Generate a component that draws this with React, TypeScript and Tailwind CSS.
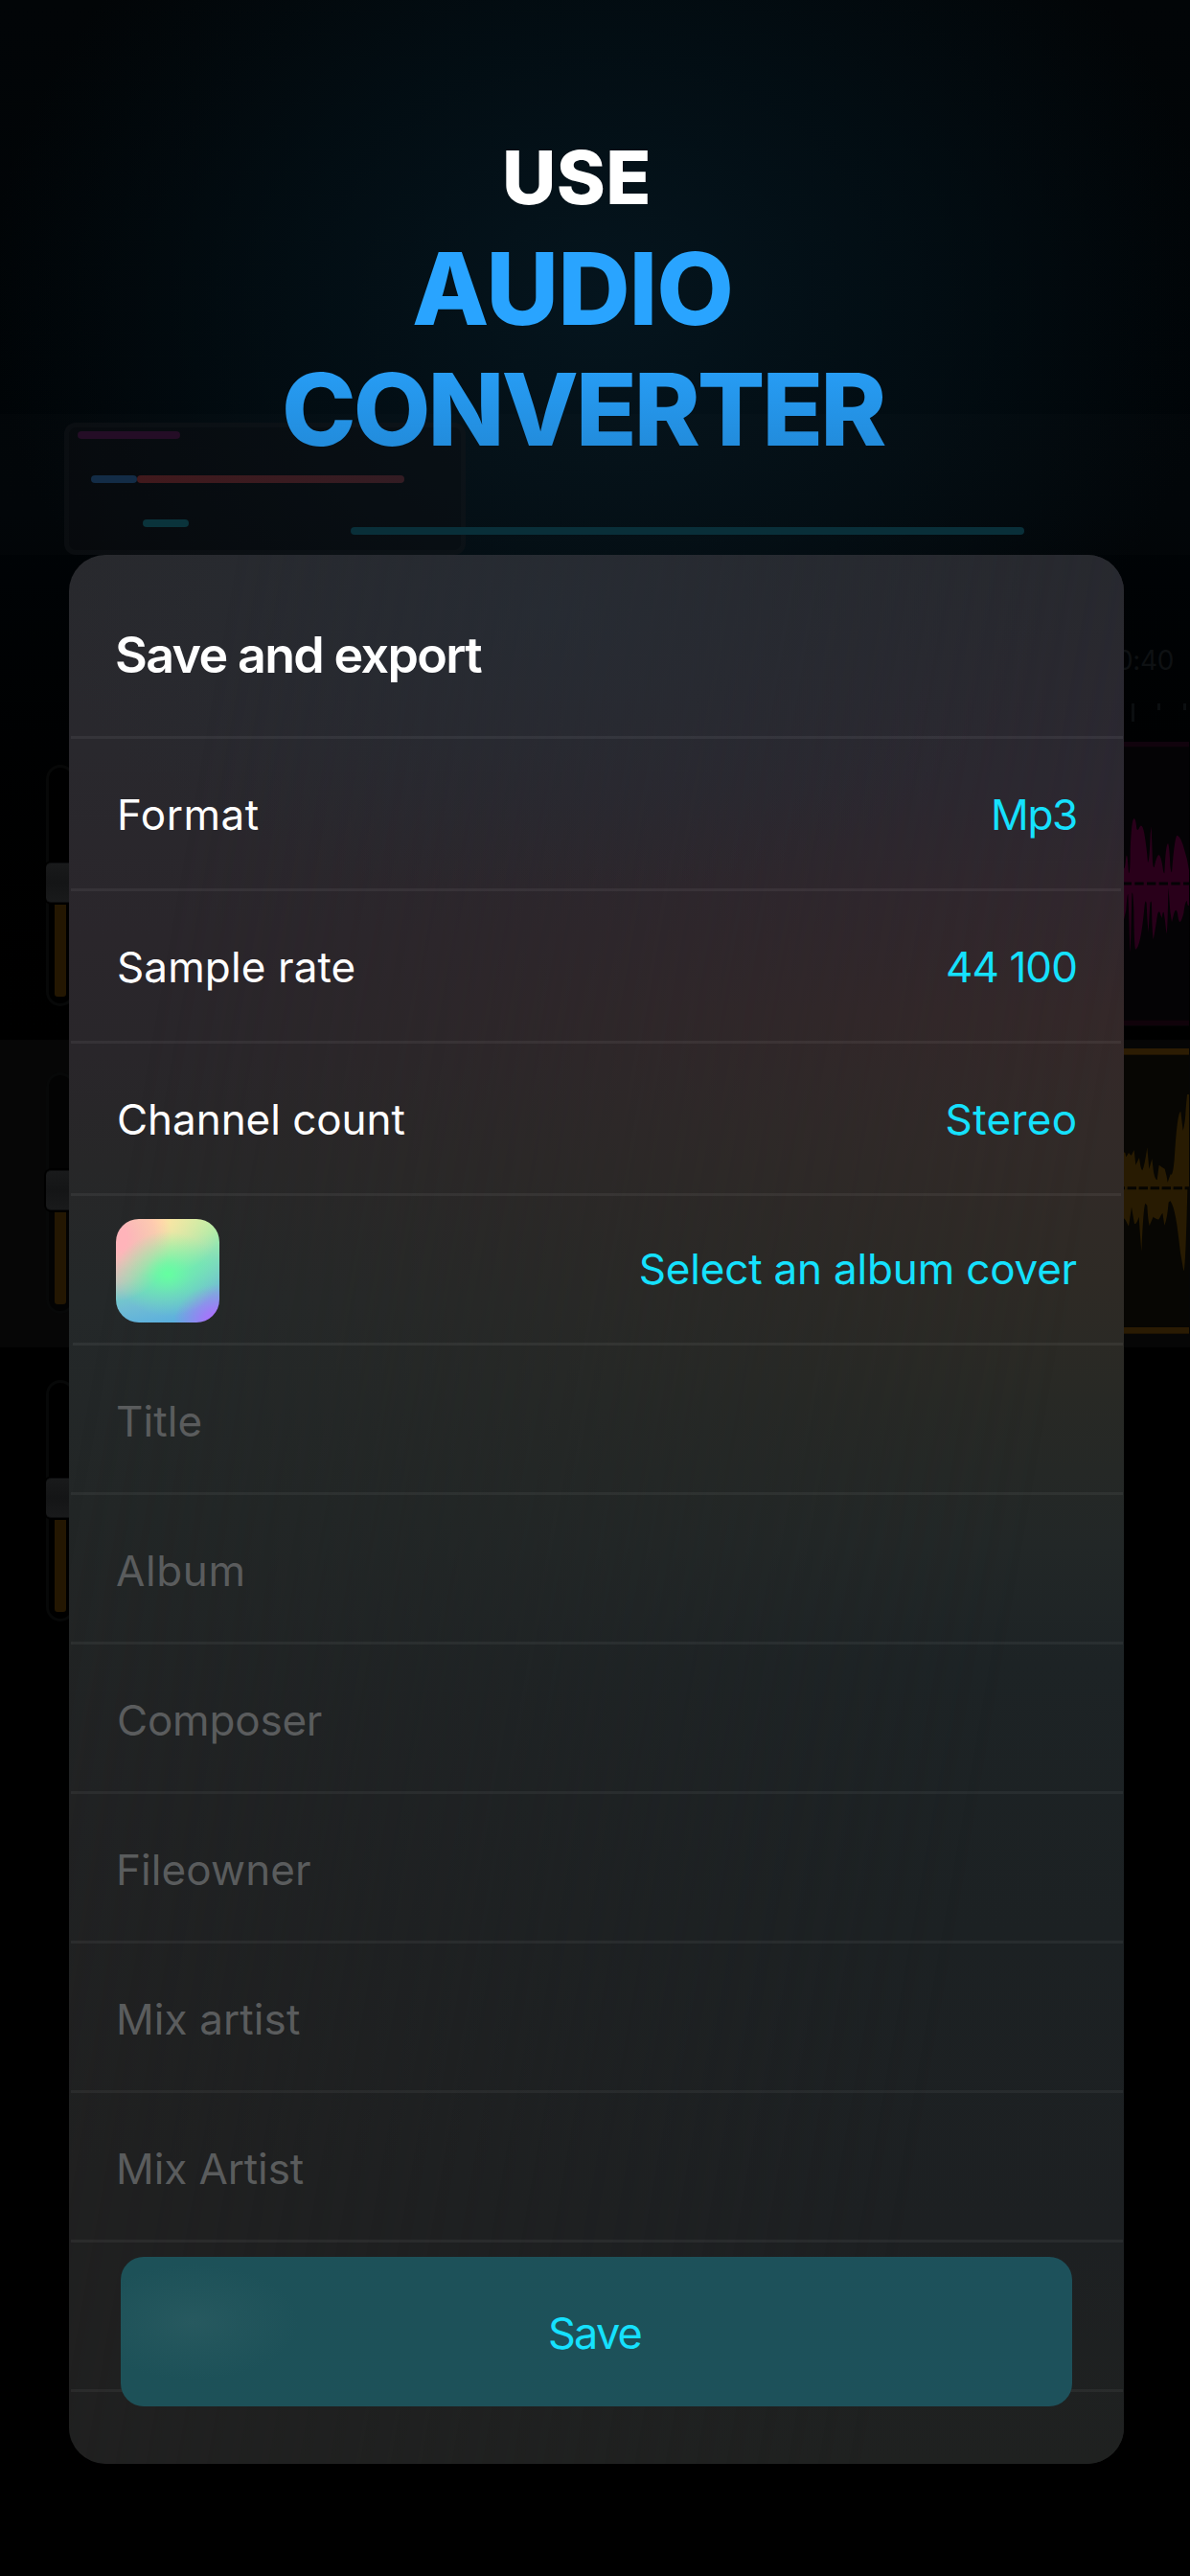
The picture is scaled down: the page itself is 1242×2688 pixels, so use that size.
type Setting = { label: string; value: string; labelClass: string; valueClass: string };

const settings: Setting[] = [
  { label: "Format", value: "Mp3", labelClass: "tracking-[0.52px]", valueClass: "tracking-[-1.3px]" },
  { label: "Sample rate", value: "44 100", labelClass: "tracking-[0.12px]", valueClass: "tracking-[-0.94px]" },
  { label: "Channel count", value: "Stereo", labelClass: "tracking-[-0.05px]", valueClass: "tracking-[0.37px] mr-[-0.5px]" },
];

const fields = [
  { name: "Title", className: "tracking-[0.1px]" },
  { name: "Album", className: "tracking-[0.63px]" },
  { name: "Composer", className: "tracking-[-0.2px] ml-px" },
  { name: "Fileowner", className: "tracking-[0.1px]" },
  { name: "Mix artist", className: "tracking-[0.1px]" },
  { name: "Mix Artist", className: "tracking-[-0.1px]" },
];

function VolumeSlider() {
  return (
    <div className="relative mt-[34px] ml-12 h-[252px] w-[30px] rounded-[15px] border-3 border-[#070808] bg-black/40">
      <div className="absolute top-[97px] -left-[5px] h-[46px] w-11 rounded-lg bg-black" />
      <div className="absolute top-[99px] -left-[3px] h-[42px] w-10 rounded-[5px] border-y border-[#0d0e0f] bg-linear-to-b from-[#191a1b] via-[#141516] to-[#191a1b]" />
      <div className="absolute top-[143px] left-[6px] h-[96px] w-3 rounded-b-[3px] bg-[#241702]" />
    </div>
  );
}

function MagentaClip() {
  return (
    <svg width="68" height="297" viewBox="393 403 204 891" className="block">
      <rect x="393" y="403" width="204" height="891" fill="#040305" />
      <rect x="393" y="403" width="204" height="16" fill="#11030d" />
      <rect x="393" y="1275" width="204" height="16" fill="#10020a" />
      <path
        fill="#29001a"
        d="M393 800Q397 800 399 770Q402 745 405 775L408 815Q413 815 413 740Q417 643 425 643Q430 643 433 675Q437 685 442 670Q450 655 457 690Q464 730 468 780Q473 780 476 690L479 668L483 780Q485 800 488 795Q496 757 503 757Q510 762 515 800Q517 815 520 815Q524 722 531 722Q535 722 538 790Q540 812 543 812Q552 696 560 696Q572 700 582 740Q592 770 597 805L597 915Q592 920 590 900Q584 905 580 940Q572 970 567 967Q563 960 561 940Q556 920 550 940L543 968L538 935Q534 880 532 860Q530 1003 526 1003Q522 960 518 938Q515 930 512 955L508 945Q503 925 498 945Q490 1000 485 1022Q481 1000 480 910Q476 890 474 925L470 1000Q466 970 464 910Q460 890 457 925Q445 1050 429 1053Q425 1040 424 930Q421 860 418 880Q414 1070 412 1060Q408 920 406 880Q403 880 400 930L393 960Z"
      />
      <path d="M393 847H597" stroke="#040305" strokeWidth="9" strokeDasharray="28 10" strokeDashoffset="4" />
    </svg>
  );
}

function AmberClip() {
  return (
    <svg width="68" height="298" viewBox="393 103 204 894" className="block">
      <rect x="393" y="103" width="204" height="894" fill="#070603" />
      <rect x="393" y="103" width="204" height="20" fill="#2c1c03" />
      <rect x="393" y="976" width="204" height="20" fill="#2a1b03" />
      <path
        fill="#281b02"
        d="M393 428L397 430L400 443L408 430L416 438L425 421L430 468L441 445Q446 485 451 485Q458 470 466 413L472 480L481 448L486 490Q491 515 497 515L503 468Q512 475 521 480Q527 500 530 522L539 497Q546 505 551 450Q560 300 571 300L578 360Q585 340 587 290L591 247H597V540L592 545Q586 800 580 800Q568 740 563 685Q553 600 538 580L533 585Q528 640 520 657L514 618Q508 625 503 638Q495 640 485 630L473 658Q468 640 466 595L460 588Q454 600 448 740Q443 680 440 630Q433 655 426 652L417 600L408 660L398 640L393 635Z"
      />
      <path d="M393 540H597" stroke="#060502" strokeWidth="9" strokeDasharray="28 8" strokeDashoffset="25" />
    </svg>
  );
}

/* Dimmed editor screen that sits behind the export sheet. */
function EditorBackdrop() {
  return (
    <div className="absolute inset-0 flex flex-col bg-linear-to-b from-[#020507] via-[#000407] via-20% to-black to-45%">
      <div className="absolute inset-x-0 top-0 h-[800px] bg-[radial-gradient(ellipse_640px_540px_at_630px_310px,#05151e_0%,#031017b3_55%,transparent_100%)]" />
      <div className="relative mt-[432px] h-[147px] bg-white/[0.008] pt-[9px]">
        <div className="relative ml-[67px] h-[138px] w-[419px] rounded-xl border-5 border-white/[0.018] bg-[#0b0d12]/50">
          <div className="absolute top-[4px] left-[9px] h-2 w-[107px] rounded-full bg-[#240d26]" />
          <div className="absolute top-[50px] left-[23px] h-2 w-12 rounded-full bg-[#132c46]" />
          <div className="absolute top-[50px] left-[71px] h-2 w-[279px] rounded-full bg-linear-to-r from-[#41191c] to-[#331c23]" />
          <div className="absolute top-[96px] left-[77px] h-2 w-12 rounded-full bg-[#0a333b]" />
        </div>
        <div className="absolute top-[118px] left-[366px] h-2 w-[703px] rounded-full bg-[#092f39]" />
      </div>
      <div className="relative flex h-[185px] flex-col items-end">
        <div className="mt-[93px] mr-[17px] font-['Inter',sans-serif] text-[28px] leading-[34px] tracking-[-0.4px] text-[#0e1113]">0:40</div>
        <div className="mt-[28px] flex w-[61px] items-start gap-6">
          <div className="h-[19px] w-[3px] shrink-0 bg-[#0b0e10]" />
          <div className="h-[7px] w-[3px] shrink-0 bg-[#0b0e10]" />
          <div className="h-[7px] w-[3px] shrink-0 bg-[#0b0e10]" />
        </div>
      </div>
      <div className="relative flex h-[321px] items-start justify-between pr-px">
        <VolumeSlider />
        <div className="mt-[10px]"><MagentaClip /></div>
      </div>
      <div className="relative flex h-[321px] items-start justify-between bg-[#060606] pr-px">
        <VolumeSlider />
        <div className="mt-[9px]"><AmberClip /></div>
      </div>
      <div className="relative h-[321px]">
        <VolumeSlider />
      </div>
    </div>
  );
}

export default function App() {
  return (
    <main className="relative h-[2688px] w-[1242px] overflow-hidden bg-black font-['Inter',sans-serif]">
      <EditorBackdrop />

      <header className="relative flex h-[579px] flex-col items-start pt-[135px] font-extrabold whitespace-nowrap">
        <span className="ml-[524px] text-[77.5px] leading-[100px] tracking-[0.4px] text-white">USE</span>
        <h1 className="mt-[3px] bg-linear-to-b from-[#29a4ff] from-45% to-[#228cdc] to-90% bg-clip-text pr-2 text-[104.5px] leading-[126px] text-transparent">
          <span className="ml-[430px] block tracking-[-1.1px]">AUDIO</span>
          <span className="ml-[294px] block tracking-[-3px]">CONVERTER</span>
        </h1>
      </header>

      <section className="relative ml-[72px] flex h-[1992px] w-[1101px] flex-col overflow-hidden rounded-[38px] bg-[linear-gradient(180deg,#28292d_0%,#29282d_10%,#2a262b_20%,#29262a_26%,#272728_32%,#242829_39%,#222626_50%,#212223_65%,#202020_85%,#202020_100%)]">
        <div className="pointer-events-none absolute inset-0 bg-[linear-gradient(180deg,#27292f_0%,#2c2831_12%,#31272d_18%,#342829_24%,#322a28_30%,#2e2a25_38%,#282925_44%,#222727_52%,#1d2325_58%,#1c2123_72%,#1d2022_88%,#1f2120_100%)] [mask-image:linear-gradient(100deg,transparent_12%,black_82%)]" />
        <div className="pointer-events-none absolute inset-x-0 top-0 h-[420px] bg-[radial-gradient(ellipse_520px_300px_at_500px_60px,#262d36a0,transparent)]" />

        <div className="relative h-[189px] pt-[73px] pl-12">
          <h2 className="text-[52px] leading-[64px] font-semibold tracking-[-1.65px] whitespace-nowrap text-white">Save and export</h2>
        </div>
        <div className="relative mx-[1.5px] h-[3px] shrink-0 bg-white/6" />

        {settings.map((s) => (
          <div key={s.label} className="relative">
            <div className="flex h-[156px] items-center justify-between pt-0.5 pr-[49px] pl-[50px] text-[44px]">
              <span className={`text-white ${s.labelClass}`}>{s.label}</span>
              <span className={`text-[#15e1ff] ${s.valueClass}`}>{s.value}</span>
            </div>
            <div className="mr-[3.5px] ml-[1.5px] h-[3px] bg-white/6" />
          </div>
        ))}

        <div className="relative flex h-[153px] items-center justify-between pt-[3px] pr-[49px] pl-[49px]">
          <div className="size-[108px] rounded-[24px] bg-[radial-gradient(ellipse_54px_44px_at_50%_53%,#64ffa0_0%,#64ffa070_45%,transparent_100%),radial-gradient(ellipse_48px_40px_at_100%_100%,#b26cff_15%,transparent_100%),radial-gradient(ellipse_58px_66px_at_0%_18%,#ffb4ba_20%,#ffb4ba88_70%,transparent_100%),radial-gradient(ellipse_70px_60px_at_40%_0%,#ffe3a5_8%,transparent_100%),linear-gradient(170deg,#c8f8a0_0%,#a8eca8_25%,#7cdcbc_50%,#70bcd4_75%,#5cb0dd_92%)]" />
          <span className="mb-1 text-[44px] tracking-[-0.19px] text-[#15e1ff]">Select an album cover</span>
        </div>
        <div className="relative mr-[1.5px] ml-1 h-[3px] shrink-0 bg-white/6" />

        {fields.map((f) => (
          <div key={f.name} className="relative">
            <div className="flex h-[153px] items-center pt-[5px] pl-[49px] text-[44px]">
              <span className={`text-[#5a5c5d] ${f.className}`}>{f.name}</span>
            </div>
            <div className="mx-[1.5px] h-[3px] bg-white/5" />
          </div>
        ))}

        <div className="relative h-[156px]">
          <div className="absolute inset-x-[1.5px] bottom-0 h-[3px] bg-white/5" />
          <button className="absolute top-[15px] left-[54px] flex h-[156px] w-[993px] items-center justify-center rounded-[24px] bg-[radial-gradient(ellipse_110px_60px_at_75px_68px,#27595f,#27595f80_45%,transparent),linear-gradient(90deg,#1d5158,#1d515b)] pt-[4px] pr-1 text-[45px] tracking-[-1.8px] text-[#15e1ff]">
            Save
          </button>
        </div>
      </section>
    </main>
  );
}
